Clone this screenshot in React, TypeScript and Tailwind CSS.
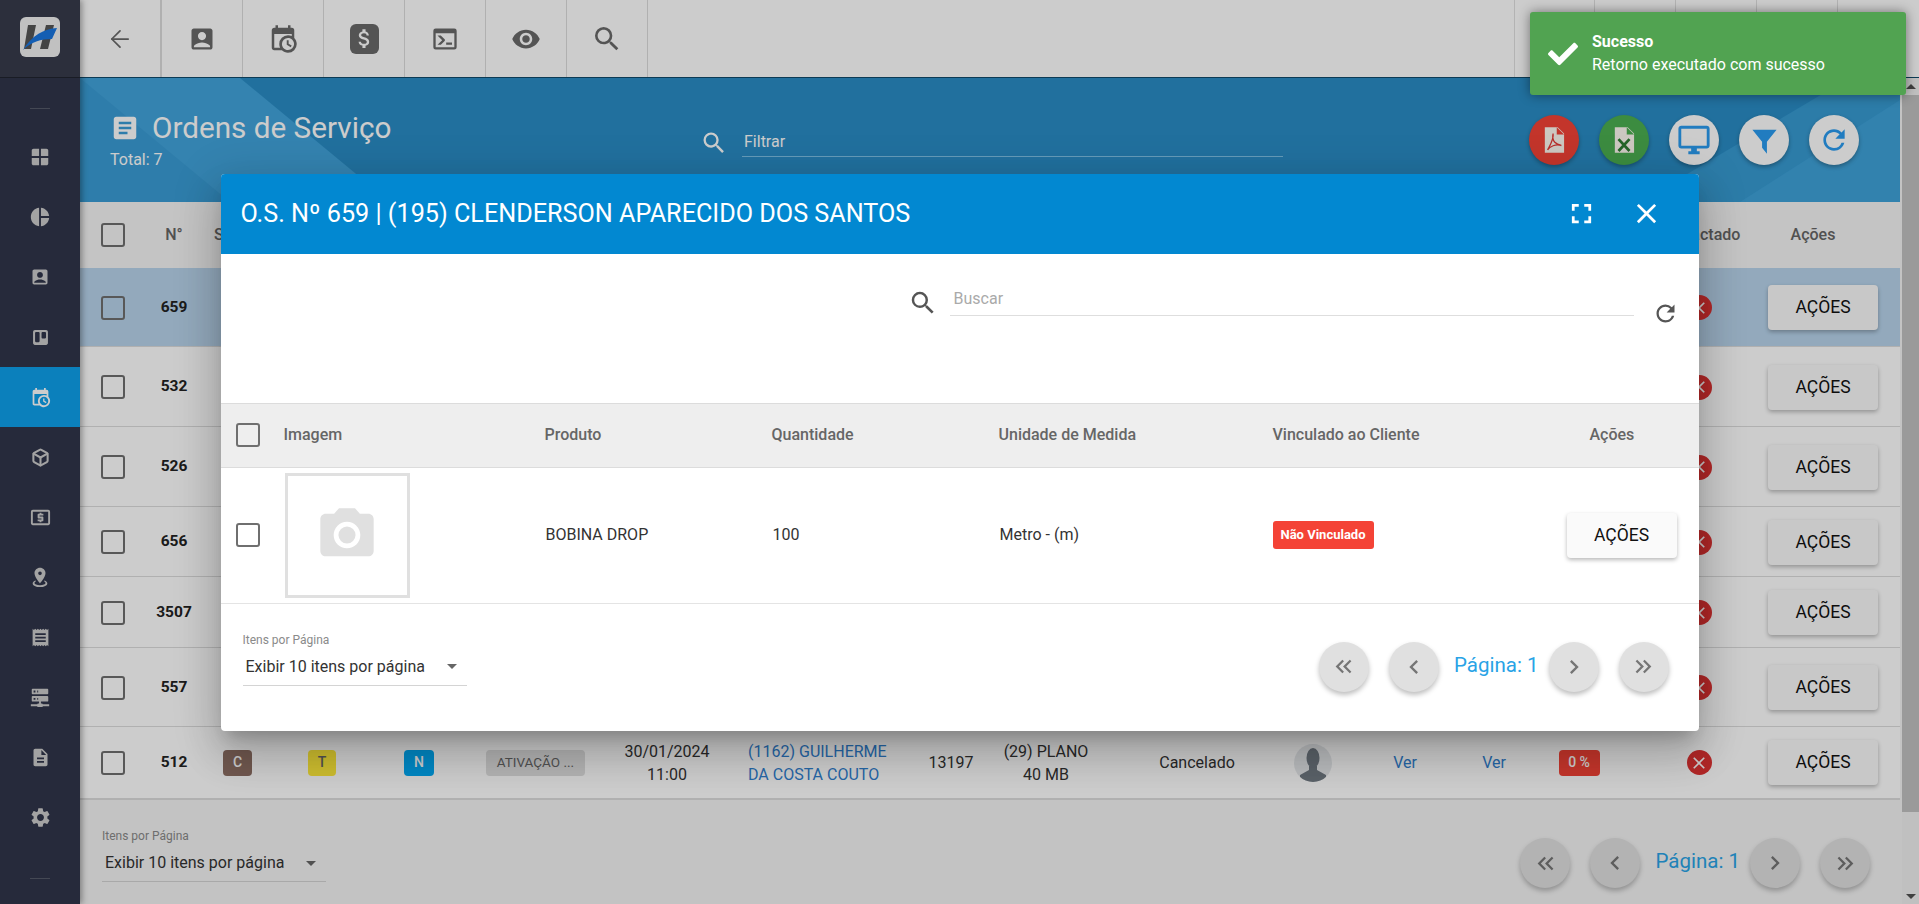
import React from 'react';
import {
  MdAccountBox,
  MdArticle,
  MdAttachMoney,
  MdCameraAlt,
  MdChevronLeft,
  MdChevronRight,
  MdClose,
  MdDescription,
  MdFullscreen,
  MdKeyboardDoubleArrowLeft,
  MdKeyboardDoubleArrowRight,
  MdLocalAtm,
  MdOutlineDesktopWindows,
  MdPieChart,
  MdReceipt,
  MdRefresh,
  MdSearch,
  MdSettings,
  MdVisibility,
  MdWindow,
} from 'react-icons/md';
import { FaCheck, FaTrello } from 'react-icons/fa';
import { ArrowLeft, Box } from 'lucide-react';

const CALENDAR_CLOCK =
  'M15,13H16.5V15.82L18.94,17.23L18.19,18.53L15,16.69V13M19,8H5V19H9.67C9.24,18.09 9,17.07 9,16A7,7 0 0,1 16,9C17.07,9 18.09,9.24 19,9.67V8M5,21C3.89,21 3,20.1 3,19V5C3,3.89 3.89,3 5,3H6V1H8V3H16V1H18V3H19A2,2 0 0,1 21,5V11.1C22.24,12.36 23,14.09 23,16A7,7 0 0,1 16,23C14.09,23 12.36,22.24 11.1,21H5M16,11.15A4.85,4.85 0 0,0 11.15,16C11.15,18.68 13.32,20.85 16,20.85A4.85,4.85 0 0,0 20.85,16C20.85,13.32 18.68,11.15 16,11.15Z';
const CONSOLE =
  'M20,19V7H4V19H20M20,3A2,2 0 0,1 22,5V19A2,2 0 0,1 20,21H4A2,2 0 0,1 2,19V5A2,2 0 0,1 4,3H20M13,17V15H18V17H13M9.58,13L5.57,9H8.4L11.7,12.3C12.09,12.69 12.09,13.33 11.7,13.72L8.42,17H5.59L9.58,13Z';
const MARKER_RADIUS =
  'M12,2C15.31,2 18,4.66 18,7.95C18,12.41 12,19 12,19C12,19 6,12.41 6,7.95C6,4.66 8.69,2 12,2M12,6A2,2 0 0,0 10,8A2,2 0 0,0 12,10A2,2 0 0,0 14,8A2,2 0 0,0 12,6M20,19C20,21.21 16.42,23 12,23C7.58,23 4,21.21 4,19C4,17.71 5.22,16.56 7.11,15.83L7.75,16.74C6.67,17.19 6,17.81 6,18.5C6,19.88 8.69,21 12,21C15.31,21 18,19.88 18,18.5C18,17.81 17.33,17.19 16.25,16.74L16.89,15.83C18.78,16.56 20,17.71 20,19Z';
const SERVER_NETWORK =
  'M13,19H14A1,1 0 0,1 15,20H22V22H15A1,1 0 0,1 14,23H10A1,1 0 0,1 9,22H2V20H9A1,1 0 0,1 10,19H11V17H4A1,1 0 0,1 3,16V12A1,1 0 0,1 4,11H20A1,1 0 0,1 21,12V16A1,1 0 0,1 20,17H13V19M4,3H20A1,1 0 0,1 21,4V8A1,1 0 0,1 20,9H4A1,1 0 0,1 3,8V4A1,1 0 0,1 4,3M9,7H10V5H9V7M9,15H10V13H9V15M5,5V7H7V5H5M5,13V15H7V13H5Z';
const FUNNEL = 'M2 3h20l-8 10v10l-4-5v-5z';

function PathIcon({ d, size, className }: { d: string; size: number; className?: string }) {
  return (
    <svg viewBox="0 0 24 24" width={size} height={size} fill="currentColor" className={className}>
      <path d={d} />
    </svg>
  );
}

// same column grid for the list header and its rows
const gridCols =
  'grid grid-cols-[66px_56px_71px_98px_96px_137px_126px_176px_90px_100px_202px_30px_154px_24px_146px_94px_154px] items-center';

const rows = [
  { id: '659', h: 'h-[79px]', selected: true },
  { id: '532', h: 'h-[80px]' },
  { id: '526', h: 'h-[80px]' },
  { id: '656', h: 'h-[70px]' },
  { id: '3507', h: 'h-[71px]' },
  { id: '557', h: 'h-[79px]' },
];

function Check() {
  return <div className="w-6 h-6 rounded-[3px] border-2 border-[#6f6f6f]" />;
}

function ActionsButton() {
  return (
    <button className="w-[110px] h-[45px] rounded-[4px] bg-[#fafafa] text-[17.5px] text-[#111] shadow-[0_2px_4px_rgba(0,0,0,0.28)]">
      AÇÕES
    </button>
  );
}

function CancelDot() {
  return (
    <div className="w-[25px] h-[25px] rounded-full bg-[#df3232] flex items-center justify-center">
      <MdClose size={20} className="text-white" />
    </div>
  );
}

function RoundBtn({ children }: { children: React.ReactNode }) {
  return (
    <button className="w-[50px] h-[50px] rounded-full bg-[#e0e0e0] text-[#757575] flex items-center justify-center shadow-[0_3px_5px_rgba(0,0,0,0.25)]">
      {children}
    </button>
  );
}

function ListFooter() {
  return (
    <div className="flex items-start justify-between pl-[22px] pr-[30px] pt-[38px]">
      <div className="w-[224px] border-b border-[#d4d4d4] h-[44px] flex flex-col">
        <span className="text-[12px] leading-[12px] text-[#8a8a8a] -mt-[8px]">Itens por Página</span>
        <div className="flex items-center justify-between pl-[3px] pr-[10px] mt-[11px]">
          <span className="text-[16px] leading-[20px] text-[#333]">Exibir 10 itens por página</span>
          <span className="w-0 h-0 border-x-[5px] border-x-transparent border-t-[5px] border-t-[#666]" />
        </div>
      </div>
      <div className="flex items-center">
        <RoundBtn>
          <MdKeyboardDoubleArrowLeft size={27} />
        </RoundBtn>
        <div className="ml-5">
          <RoundBtn>
            <MdChevronLeft size={28} />
          </RoundBtn>
        </div>
        <span className="ml-[15px] mr-[10px] mb-[3px] text-[20.5px] text-[#29a3e6] whitespace-nowrap">Página: 1</span>
        <RoundBtn>
          <MdChevronRight size={28} />
        </RoundBtn>
        <div className="ml-5">
          <RoundBtn>
            <MdKeyboardDoubleArrowRight size={27} />
          </RoundBtn>
        </div>
      </div>
    </div>
  );
}

function Sidebar() {
  const iconClass = 'text-[#cccccc]';
  const items = [
    <MdWindow size={22} className={iconClass} />,
    <MdPieChart size={22} className={iconClass} />,
    <MdAccountBox size={20} className={iconClass} />,
    <FaTrello size={17} className={iconClass} />,
    <PathIcon d={CALENDAR_CLOCK} size={21} className="text-white" />,
    <Box size={19} strokeWidth={2.6} className={iconClass} />,
    <MdLocalAtm size={23} className={iconClass} />,
    <PathIcon d={MARKER_RADIUS} size={22} className={iconClass} />,
    <MdReceipt size={21} className={iconClass} />,
    <PathIcon d={SERVER_NETWORK} size={22} className={iconClass} />,
    <MdDescription size={21} className={iconClass} />,
    <MdSettings size={23} className={iconClass} />,
  ];
  return (
    <aside className="relative z-10 w-20 shrink-0 bg-[#30354a] flex flex-col shadow-[2px_0_6px_rgba(0,0,0,0.35)]">
      <div className="h-[78px] bg-[#373b4b] border-b border-[#20232f] flex items-start justify-center pt-[17px]">
        <svg viewBox="0 0 40 40" width={40} height={40}>
          <rect width="40" height="40" rx="6" fill="#f2f2f2" />
          <path d="M8 8h8l-5 24H4zM26 8h8l-6 24h-8z" fill="#555" />
          <path d="M37 11C24 12 12 18 3 33c8-8 18-11 29-11z" fill="#1976e0" />
        </svg>
      </div>
      <div className="mx-auto mt-[30px] w-[20px] border-t border-[#565a6a]" />
      <div className="mt-[18px] flex flex-col">
        {items.map((icon, i) => (
          <div
            key={i}
            className={`h-[60px] flex items-center justify-center ${i === 4 ? 'bg-[#0ea0ec]' : ''}`}
          >
            {icon}
          </div>
        ))}
      </div>
      <div className="mx-auto mt-[31px] w-[20px] border-t border-[#565a6a]" />
    </aside>
  );
}

function TopItem({ children, wide }: { children: React.ReactNode; wide?: boolean }) {
  return (
    <div
      className={`h-full flex items-center justify-center border-r border-[#dcdcdc] ${
        wide ? 'w-[82px] border-r-2' : 'w-[81px]'
      }`}
    >
      {children}
    </div>
  );
}

function TopBar() {
  const iconClass = 'text-[#6a6a6a]';
  return (
    <div className="h-[78px] shrink-0 bg-white flex justify-between border-b border-[#0f4a6b]">
      <div className="flex">
        <TopItem wide>
          <ArrowLeft size={28} strokeWidth={1.5} className={iconClass} />
        </TopItem>
        <TopItem>
          <MdAccountBox size={28} className={iconClass} />
        </TopItem>
        <TopItem>
          <PathIcon d={CALENDAR_CLOCK} size={30} className={iconClass} />
        </TopItem>
        <TopItem>
          <div className="w-[29px] h-[30px] rounded-[6px] bg-[#6a6a6a] flex items-center justify-center">
            <MdAttachMoney size={25} className="text-white" />
          </div>
        </TopItem>
        <TopItem>
          <PathIcon d={CONSOLE} size={28} className={iconClass} />
        </TopItem>
        <TopItem>
          <MdVisibility size={30} className={iconClass} />
        </TopItem>
        <TopItem>
          <MdSearch size={32} className={iconClass} />
        </TopItem>
      </div>
      <div className="flex">
        {[0, 1, 2, 3, 4].map((i) => (
          <div key={i} className={`w-[81px] ${i === 4 ? '' : 'border-r'} ${i === 0 ? 'border-l' : ''} border-[#e0e0e0]`} />
        ))}
      </div>
    </div>
  );
}

function FileBadge({ color, children }: { color: string; children: React.ReactNode }) {
  return (
    <svg viewBox="0 0 24 30" width={22} height={28}>
      <path d="M2 1h14l7 7v21H2z" fill="#fffaf2" />
      <path d="M15 1l8 8h-8z" fill={color} />
      {children}
    </svg>
  );
}

function ListHeader() {
  return (
    <div className="relative h-[124px] bg-[#2a8dc6] overflow-hidden">
      {/* diagonal bands of the banner */}
      <svg className="absolute inset-0 w-full h-full" viewBox="0 0 1820 124" preserveAspectRatio="none">
        <path d="M0 0H160L310 124H0Z" fill="#42a4dc" />
        <path d="M0 0L150 124H0Z" fill="#3a9dd6" />
        <path d="M1560 124L1820 -30V124Z" fill="#379bd3" />
        <path d="M1660 124L1820 22V124Z" fill="#3fa3da" />
      </svg>
      <div className="relative flex items-start">
        <div className="w-[620px] pl-[30px] pt-[32px] shrink-0">
          <div className="flex items-center gap-3">
            <MdArticle size={30} className="text-white" />
            <span className="text-[29.7px] leading-[36px] text-white">Ordens de Serviço</span>
          </div>
          <div className="text-[16px] leading-5 text-white mt-1">Total: 7</div>
        </div>
        <div className="flex items-center pt-[50px] shrink-0">
          <MdSearch size={28} className="text-white" />
          <div className="ml-[14px] w-[541px] h-[29px] border-b border-[#7fc2e8] text-[16px] leading-[20px] text-white pl-[2px] pt-[4px]">
            Filtrar
          </div>
        </div>
        <div className="ml-auto flex gap-5 pr-[41px] pt-[37px]">
          <div className="w-[50px] h-[50px] rounded-full bg-[#f44336] flex items-center justify-center shadow-[0_2px_4px_rgba(0,0,0,0.3)]">
            <FileBadge color="#f44336">
              <path d="M11 8c-2 9 4 12 9 13-6-2-13 1-15 5 3-6 7-12 6-18z" fill="none" stroke="#e53935" strokeWidth="1.4" />
            </FileBadge>
          </div>
          <div className="w-[50px] h-[50px] rounded-full bg-[#4caf50] flex items-center justify-center shadow-[0_2px_4px_rgba(0,0,0,0.3)]">
            <FileBadge color="#4caf50">
              <path d="M6 14l12 13M18 14L6 27" stroke="#2e7d32" strokeWidth="3" fill="none" />
            </FileBadge>
          </div>
          {[
            <MdOutlineDesktopWindows size={34} />,
            <PathIcon d={FUNNEL} size={29} />,
            <MdRefresh size={32} />,
          ].map((icon, i) => (
            <div
              key={i}
              className="w-[50px] h-[50px] rounded-full bg-white text-[#2a9cf0] flex items-center justify-center shadow-[0_2px_4px_rgba(0,0,0,0.3)]"
            >
              {icon}
            </div>
          ))}
        </div>
      </div>
    </div>
  );
}

function Avatar() {
  return (
    <div className="w-[38px] h-[38px] shrink-0 rounded-full bg-[#e6e9ec] overflow-hidden">
      <svg viewBox="0 0 38 38" width={38} height={38}>
        <ellipse cx="19" cy="14" rx="6.5" ry="10" fill="#717a83" />
        <path d="M15 22h8v4l9 5v7H6v-7l9-5z" fill="#717a83" />
      </svg>
    </div>
  );
}

function ListTable() {
  return (
    <div>
      <div className={`${gridCols} h-[66px] bg-[#f5f5f5] text-[16px] font-medium text-[#666]`}>
        <div className="flex justify-center">
          <Check />
        </div>
        <span className="text-center">N°</span>
        <span className="pl-3">Status</span>
        <span className="col-start-16 text-center whitespace-nowrap">Contactado</span>
        <span className="col-start-17 pr-5 text-center">Ações</span>
      </div>
      {rows.map((r) => (
        <div
          key={r.id}
          className={`${gridCols} ${r.h} pt-px border-b border-[#dcdcdc] ${r.selected ? 'bg-[#b8d4ec]' : 'bg-white'}`}
        >
          <div className="flex justify-center">
            <Check />
          </div>
          <span className="text-center text-[15.5px] font-bold text-[#222]">{r.id}</span>
          <div className="col-start-16 flex justify-center">
            <CancelDot />
          </div>
          <div className="col-start-17 flex justify-center">
            <ActionsButton />
          </div>
        </div>
      ))}
      <div className={`${gridCols} h-[73px] border-b-2 border-[#dcdcdc] bg-white text-[16px] text-[#333]`}>
        <div className="flex justify-center">
          <Check />
        </div>
        <span className="text-center text-[15.5px] font-bold text-[#222]">512</span>
        <div className="flex justify-center">
          <span className="w-[29px] h-[26px] rounded-[4px] bg-[#8d6e63] text-white text-[14px] font-medium flex items-center justify-center">C</span>
        </div>
        <div className="flex justify-center">
          <span className="w-[28px] h-[26px] rounded-[4px] bg-[#ffeb3b] text-[#666] text-[14px] font-medium flex items-center justify-center">T</span>
        </div>
        <div className="flex justify-center">
          <span className="w-[30px] h-[26px] rounded-[4px] bg-[#03a9f4] text-white text-[14px] font-medium flex items-center justify-center">N</span>
        </div>
        <div className="flex justify-center">
          <span className="w-[99px] h-[26px] rounded-[4px] bg-[#e0e0e0] text-[#666] text-[13.5px] flex items-center justify-center">ATIVAÇÃO ...</span>
        </div>
        <span className="text-center leading-[23px]">30/01/2024<br />11:00</span>
        <span className="text-[#2f80d0] leading-[23px] pl-[18px] whitespace-nowrap">(1162) GUILHERME<br />DA COSTA COUTO</span>
        <span className="text-center">13197</span>
        <span className="text-center leading-[23px]">(29) PLANO<br />40 MB</span>
        <span className="text-center">Cancelado</span>
        <div className="flex justify-center">
          <Avatar />
        </div>
        <span className="text-center text-[#2f80d0]">Ver</span>
        <span className="text-center text-[#2f80d0]">Ver</span>
        <div className="flex justify-center">
          <span className="w-[41px] h-[26px] rounded-[4px] bg-[#f44336] text-white text-[14px] font-medium flex items-center justify-center">0 %</span>
        </div>
        <div className="flex justify-center">
          <CancelDot />
        </div>
        <div className="flex justify-center">
          <ActionsButton />
        </div>
      </div>
    </div>
  );
}

function Modal() {
  const cols = 'grid grid-cols-[63px_261px_227px_227px_274px_274px_1fr] items-center';
  return (
    <div className="w-[1478px] h-[557px] rounded-[4px] bg-white overflow-hidden shadow-[0_11px_15px_-7px_rgba(0,0,0,0.2),0_24px_38px_3px_rgba(0,0,0,0.14),0_9px_46px_8px_rgba(0,0,0,0.12)]">
      <div className="h-20 bg-[#0288d1] flex items-center pl-5 pr-[36px] text-white">
        <span className="text-[25.2px] pt-px flex-1">O.S. Nº 659 | (195) CLENDERSON APARECIDO DOS SANTOS</span>
        <MdFullscreen size={33} />
        <MdClose size={33} className="ml-8" />
      </div>
      <div className="h-[149px]">
        <div className="flex items-start pl-[687px] pt-[34px]">
          <MdSearch size={30} className="text-[#555]" />
          <div className="ml-[12px] w-[684px] h-[28px] border-b border-[#dedede] text-[16px] leading-[20px] text-[#aaa] pl-[4px] pt-px">
            Buscar
          </div>
          <MdRefresh size={27} className="ml-[18px] mt-[12px] text-[#555]" />
        </div>
      </div>
      <div className={`${cols} h-[65px] bg-[#eeeeee] border-y border-[#dcdcdc] text-[16px] font-medium text-[#666]`}>
        <div className="pl-[15px]">
          <Check />
        </div>
        <span>Imagem</span>
        <span>Produto</span>
        <span>Quantidade</span>
        <span>Unidade de Medida</span>
        <span>Vinculado ao Cliente</span>
        <span className="pl-[43px]">Ações</span>
      </div>
      <div className={`${cols} h-[136px] border-b border-[#e4e4e4] text-[16px] text-[#333]`}>
        <div className="pl-[15px]">
          <Check />
        </div>
        <div className="ml-px w-[125px] h-[125px] border-[3px] border-[#e0e0e0] flex items-center justify-center">
          <MdCameraAlt size={64} className="text-[#e0e0e0]" />
        </div>
        <span className="pl-px">BOBINA DROP</span>
        <span className="pl-px">100</span>
        <span className="pl-px">Metro - (m)</span>
        <div>
          <span className="w-[101px] h-7 rounded-[3px] bg-[#f44336] text-white text-[13px] font-bold flex items-center justify-center">Não Vinculado</span>
        </div>
        <div className="pl-5">
          <ActionsButton />
        </div>
      </div>
      <ListFooter />
    </div>
  );
}

export default function App() {
  return (
    <div className="relative h-screen w-full flex overflow-hidden bg-white font-[Roboto,sans-serif]">
      <Sidebar />
      <div className="flex-1 min-w-0 flex flex-col">
        <TopBar />
        <div className="flex flex-1 min-h-0">
          <main className="flex-1 min-w-0 pr-[2px] bg-[#f4f4f4]">
            <ListHeader />
            <ListTable />
            <ListFooter />
          </main>
          <div className="w-[17px] shrink-0 bg-[#f1f1f1] flex flex-col items-center justify-between pb-[5px]">
            <div className="w-full">
              <div className="h-[17px] flex items-center justify-center">
                <span className="w-0 h-0 border-x-[5px] border-x-transparent border-b-[5px] border-b-[#505050]" />
              </div>
              <div className="h-[717px] bg-[#c1c1c1]" />
            </div>
            <span className="w-0 h-0 border-x-[5px] border-x-transparent border-t-[5px] border-t-[#505050]" />
          </div>
        </div>
      </div>

      <div className="absolute inset-0 z-20 bg-black/20 flex items-center justify-center">
        <Modal />
      </div>

      <div className="absolute z-30 top-3 right-[13px] w-[376px] h-[83px] rounded-[3px] bg-[#51a351] flex items-center text-white shadow-[0_0_12px_rgba(0,0,0,0.45)]">
        <FaCheck size={30} className="ml-[18px] shrink-0" />
        <div className="ml-[14px] pb-[2px] text-[16px] leading-[23px]">
          <div className="font-bold">Sucesso</div>
          <div>Retorno executado com sucesso</div>
        </div>
      </div>
    </div>
  );
}
